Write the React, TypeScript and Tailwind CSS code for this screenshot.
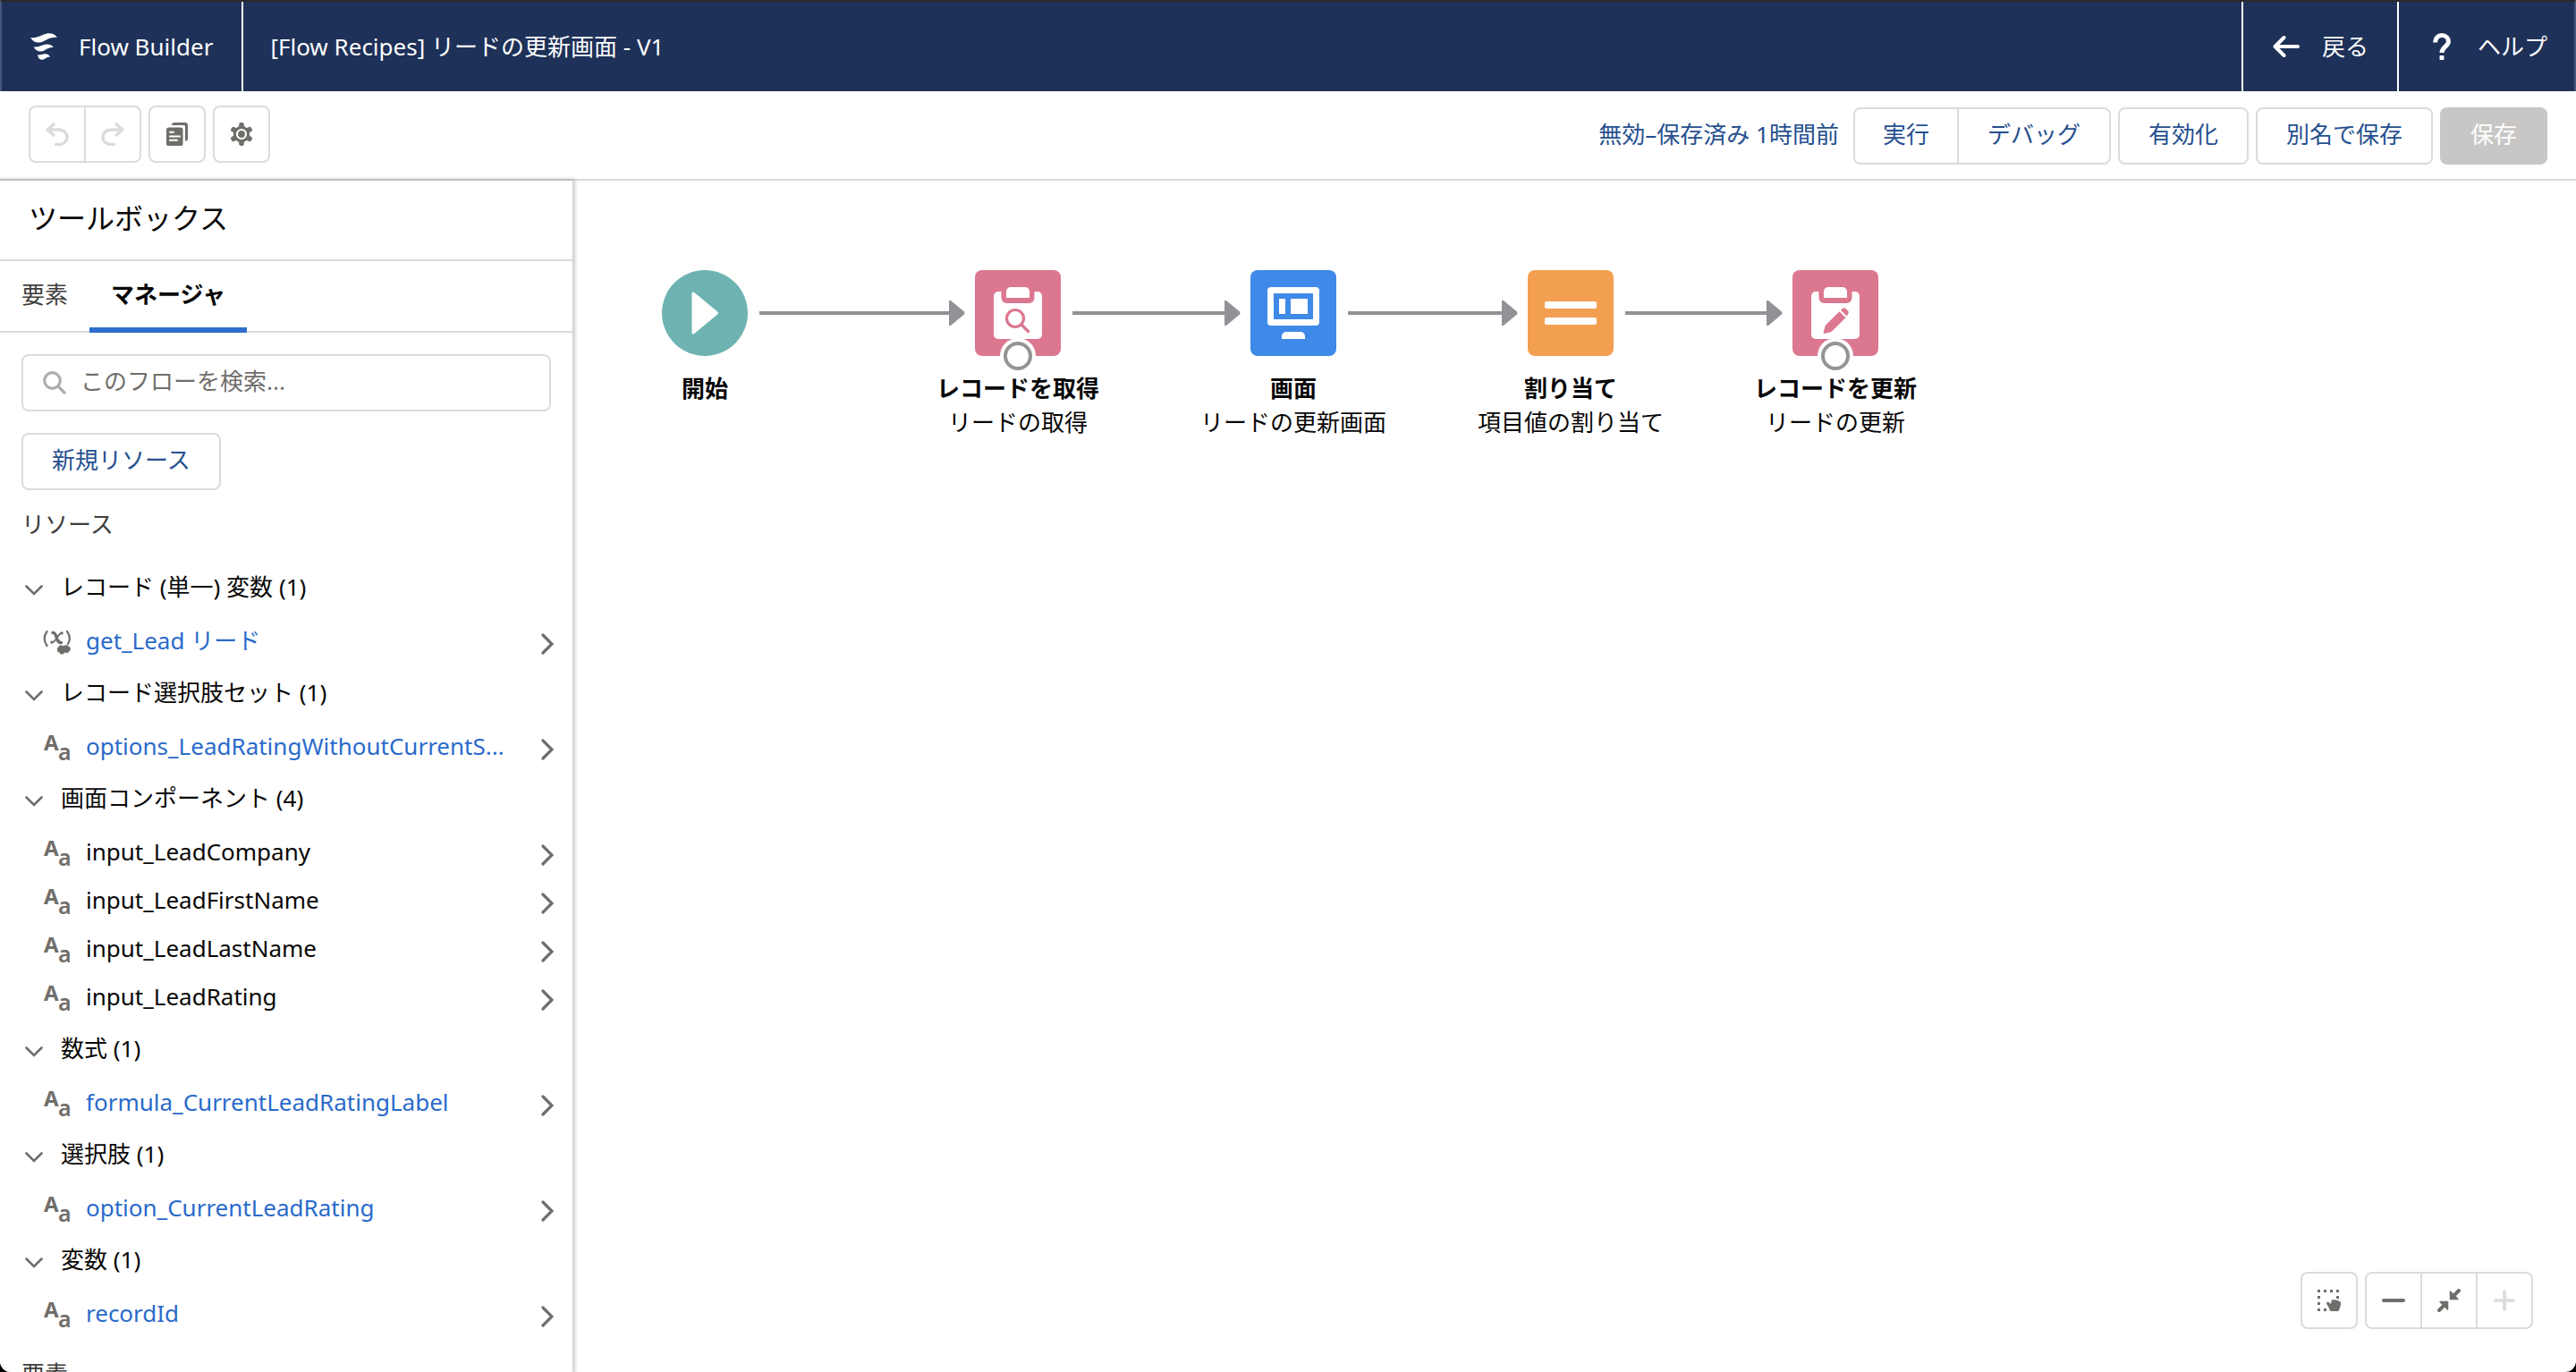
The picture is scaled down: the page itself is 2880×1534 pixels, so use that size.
import type { ReactNode } from "react";

type Item = { label: string; link?: boolean; icon?: "text" | "record" };
type Group = { title: string; items: Item[] };

const groups: Group[] = [
  { title: "レコード (単一) 変数 (1)", items: [{ label: "get_Lead リード", link: true, icon: "record" }] },
  { title: "レコード選択肢セット (1)", items: [{ label: "options_LeadRatingWithoutCurrentS...", link: true }] },
  {
    title: "画面コンポーネント (4)",
    items: [
      { label: "input_LeadCompany" },
      { label: "input_LeadFirstName" },
      { label: "input_LeadLastName" },
      { label: "input_LeadRating" },
    ],
  },
  { title: "数式 (1)", items: [{ label: "formula_CurrentLeadRatingLabel", link: true }] },
  { title: "選択肢 (1)", items: [{ label: "option_CurrentLeadRating", link: true }] },
  { title: "変数 (1)", items: [{ label: "recordId", link: true }] },
];

function FlowLogo() {
  return (
    <svg width="30" height="30" viewBox="0 0 30 30" fill="white" aria-hidden="true">
      <path d="M0 5C4 6 9 4 14 2C20 -0.7 26 -0.6 30 5C26 4.6 22 5 17 8C10 12 4 11.5 0 5Z" />
      <path d="M3.6 15.4C7 15.8 10 15 13.5 13.6C18 11.8 23 12 26 16C23 16 20 16.6 17 18.5C12 22 6.5 21 3.6 15.4Z" />
      <path d="M8 24.3C10.5 24.7 12.5 24 14.5 23.5C18 22.5 21 23.8 22 26.8C20 26.5 18.5 27 16.5 28.5C13 31 9 30 8 24.3Z" />
    </svg>
  );
}

function BackArrow() {
  return (
    <svg width="30" height="24" viewBox="0 0 30 24" fill="none" stroke="white" strokeWidth="4" strokeLinecap="round" strokeLinejoin="round" aria-hidden="true">
      <path d="M12.5 2L2.5 12L12.5 22M3 12H28" />
    </svg>
  );
}

function HelpMark() {
  return (
    <svg width="20" height="30" viewBox="0 0 20 30" aria-hidden="true">
      <path d="M2.6 10.5C2.6 5.5 5.8 2.6 10 2.6C14.4 2.6 17.4 5.5 17.4 9.5C17.4 14.8 10 15 10 22" fill="none" stroke="white" strokeWidth="5" />
      <rect x="7.5" y="25" width="5" height="5" rx="1" fill="white" />
    </svg>
  );
}

function Undo({ flip = false }: { flip?: boolean }) {
  return (
    <svg width="26" height="26" viewBox="0 0 26 26" fill="none" stroke="#dddbda" strokeWidth="3.4" strokeLinecap="round" strokeLinejoin="round" aria-hidden="true">
      <path
        d={
          flip
            ? "M17 2L24 8L17 14M23 8H11.5C6 8 2 12 2 16.5C2 21 6 24.5 11.5 24.5H14.5"
            : "M9 2L2 8L9 14M3 8H14.5C20 8 24 12 24 16.5C24 21 20 24.5 14.5 24.5H11.5"
        }
      />
    </svg>
  );
}

function CopyIcon() {
  return (
    <svg width="24" height="26" viewBox="0 0 24 26" aria-hidden="true">
      <path d="M6 3C6 1 7 0 9 0H21C23 0 24 1 24 3V18C24 20 23 20.5 21 20.5V5C21 3.5 20.5 3 19 3H6Z" fill="#706e6b" />
      <rect x="0" y="5.5" width="18.5" height="20.5" rx="2.6" fill="#706e6b" />
      <path d="M4 10.8H8M4 15.5H15M4 19.8H12" stroke="white" strokeWidth="2" strokeLinecap="round" />
    </svg>
  );
}

function Gear() {
  return (
    <svg width="24" height="26" viewBox="0 0 24 26" aria-hidden="true">
      <g fill="#706e6b">
        <circle cx="12" cy="13" r="9.2" />
        <rect x="9.2" y="0" width="5.6" height="26" rx="2" />
        <rect x="9.2" y="0" width="5.6" height="26" rx="2" transform="rotate(60 12 13)" />
        <rect x="9.2" y="0" width="5.6" height="26" rx="2" transform="rotate(120 12 13)" />
      </g>
      <circle cx="12" cy="13" r="5" fill="#706e6b" stroke="white" strokeWidth="2.2" />
    </svg>
  );
}

function SearchIcon() {
  return (
    <svg width="26" height="26" viewBox="0 0 26 26" fill="none" stroke="#b0adab" strokeWidth="3.2" strokeLinecap="round" aria-hidden="true">
      <circle cx="10.5" cy="10.5" r="8.8" />
      <path d="M17.5 17.5L24 24" />
    </svg>
  );
}

function ChevronDown() {
  return (
    <svg width="20" height="12" viewBox="0 0 20 12" fill="none" stroke="#706e6b" strokeWidth="2.6" strokeLinecap="round" aria-hidden="true">
      <path d="M1.5 1.5L10 10L18.5 1.5" />
    </svg>
  );
}

function ChevronRight() {
  return (
    <svg width="14" height="24" viewBox="0 0 14 24" fill="none" stroke="#706e6b" strokeWidth="3.2" strokeLinecap="round" aria-hidden="true">
      <path d="M2 2L12 12L2 22" />
    </svg>
  );
}

function TextTypeIcon() {
  return (
    <svg width="32" height="32" viewBox="0 0 32 32" fill="#706e6b" aria-hidden="true" className="overflow-visible font-['Noto_Sans',sans-serif]">
      <text x="1" y="19" fontSize="24" fontWeight="700">A</text>
      <text x="17" y="30" fontSize="25" fontWeight="600">a</text>
    </svg>
  );
}

function RecordTypeIcon() {
  return (
    <svg width="32" height="32" viewBox="0 0 32 32" fill="none" stroke="#706e6b" strokeLinecap="round" aria-hidden="true">
      <path d="M4.5 4C1 9 1 15 4.5 20M27 4C30.5 9 30.5 14 28 18" strokeWidth="2.2" />
      <path d="M11 5.5C16 4 14 17.5 20.5 16.5" strokeWidth="3.4" />
      <path d="M21.5 5.5C17.5 4.5 14.5 17 9.5 16.5" strokeWidth="2" />
      <circle cx="21" cy="6" r="1.6" fill="#706e6b" stroke="none" />
      <circle cx="10" cy="16" r="1.6" fill="#706e6b" stroke="none" />
      <g fill="#706e6b" stroke="white" strokeWidth="1">
        <path d="M17 21C18 18.5 21.500 18.500 23 20C25 18 28 18.500 29 20.500C31.500 21 32 24.500 30 26C29.500 28.500 26 29 24.500 28C22.500 31 19 30.500 18.500 28C15.500 28 14 23 17 21Z" />
      </g>
    </svg>
  );
}

function SelectIcon() {
  return (
    <svg width="26" height="26" viewBox="0 0 26 26" fill="#706e6b" aria-hidden="true">
      <path d="M0 1h3v3h-3zM7 1h3v3h-3zM14 1h3v3h-3zM21 1h3v3h-3zM0 8h3v3h-3zM21 8h3v3h-3zM0 15h3v3h-3zM0 22h3v3h-3zM7 22h3v3h-3z" />
      <path d="M10 15.5C11 14 13 14.5 14.3 16.5L15 17L15.6 13C16.5 11.6 18 12.2 18.5 12.5C20 11.8 21 12.2 21.6 13C23.5 12.6 24 13.5 24.2 14C25.5 14 26 14.8 26 16C26 19.5 25 21 24.3 23C24 24.4 23.5 25 22.5 25H15.5C14 25 13.5 24 13.3 22.5C12.5 19.5 10 18 10 15.5Z" />
    </svg>
  );
}

function FitIcon() {
  return (
    <svg width="26" height="26" viewBox="0 0 26 26" fill="#706e6b" stroke="#706e6b" aria-hidden="true">
      <path d="M14.5 3V11.5H23Z" strokeWidth="1.5" strokeLinejoin="round" />
      <path d="M11.5 23V14.5H3Z" strokeWidth="1.5" strokeLinejoin="round" />
      <path d="M18 8L24 2M8 18L2 24" strokeWidth="4" strokeLinecap="round" />
    </svg>
  );
}

function Clipboard({ children }: { children: ReactNode }) {
  return (
    <svg width="96" height="96" viewBox="0 0 96 96" aria-hidden="true">
      <rect x="21" y="24" width="54" height="53" rx="5" fill="white" />
      <path d="M29.5 22H66.5V31A6 6 0 0 1 60.5 37H35.5A6 6 0 0 1 29.5 31Z" fill="#dc7790" />
      <path d="M35 31V24A5 5 0 0 1 40 19H56A5 5 0 0 1 61 24V31Z" fill="white" />
      {children}
    </svg>
  );
}

const lookupArt = (
  <Clipboard>
    <g fill="none" stroke="#dc7790" strokeWidth="3.2">
      <circle cx="45" cy="54" r="9.5" />
      <path d="M51.5 60.5L60.5 69.5" />
    </g>
  </Clipboard>
);

const updateArt = (
  <Clipboard>
    <g fill="#dc7790">
      <path d="M34.5 70.8L36.6 62L52.5 46.2L59.5 53.2L43.5 69L35.5 71Z" />
      <path d="M54 44.7L56 42.9C57.3 41.9 58.5 41.9 59.6 43L62 45.5C63 46.6 63 47.9 62 49.2L60.8 51.5Z" />
    </g>
  </Clipboard>
);

const screenArt = (
  <svg width="96" height="96" viewBox="0 0 96 96" fill="white" aria-hidden="true">
    <path fillRule="evenodd" d="M23 19H73A4 4 0 0 1 77 23V58A4 4 0 0 1 73 62H23A4 4 0 0 1 19 58V23A4 4 0 0 1 23 19ZM26 26V55H70V26Z" />
    <rect x="32" y="32" width="7" height="17" />
    <rect x="45" y="32" width="19" height="17" />
    <path d="M35 77V74A5 5 0 0 1 40 69H56A5 5 0 0 1 61 74V77Z" />
  </svg>
);

const assignArt = (
  <svg width="96" height="96" viewBox="0 0 96 96" fill="white" aria-hidden="true">
    <rect x="19" y="35" width="58" height="8" rx="2" />
    <rect x="19" y="53" width="58" height="8" rx="2" />
  </svg>
);

const startArt = (
  <svg width="96" height="96" viewBox="0 0 96 96" aria-hidden="true">
    <path d="M35 26V70L61.5 48Z" fill="white" stroke="white" strokeWidth="3" strokeLinejoin="round" />
  </svg>
);

type FlowNode = { place: string; shape: string; art: ReactNode; title: string; sub?: string; port?: boolean };

const nodes: FlowNode[] = [
  { place: "left-[148px]", shape: "rounded-full bg-[#6eb3b2]", art: startArt, title: "開始" },
  { place: "left-[498px]", shape: "rounded-lg bg-[#dc7790]", art: lookupArt, title: "レコードを取得", sub: "リードの取得", port: true },
  { place: "left-[806px]", shape: "rounded-lg bg-[#3f8ae8]", art: screenArt, title: "画面", sub: "リードの更新画面" },
  { place: "left-[1116px]", shape: "rounded-lg bg-[#f29f51]", art: assignArt, title: "割り当て", sub: "項目値の割り当て" },
  { place: "left-[1412px]", shape: "rounded-lg bg-[#dc7790]", art: updateArt, title: "レコードを更新", sub: "リードの更新", port: true },
];

const connectors = [
  "left-[209px] w-[230px]",
  "left-[559px] w-[188px]",
  "left-[867px] w-[190px]",
  "left-[1177px] w-[176px]",
];

function Connector({ place }: { place: string }) {
  return (
    <div className={`absolute top-[134px] flex h-7 items-center ${place}`}>
      <div className="h-1 flex-1 bg-[#919297]" />
      <svg width="18" height="28" viewBox="0 0 18 28" fill="#919297" aria-hidden="true">
        <path d="M0 0H2L17 12.5Q18 14 17 15.5L2 28H0Z" />
      </svg>
    </div>
  );
}

function Node({ node }: { node: FlowNode }) {
  return (
    <div className={`absolute top-[100px] flex w-60 -translate-x-1/2 flex-col items-center ${node.place}`}>
      <button type="button" aria-label={node.title} className={`relative size-24 ${node.shape}`}>
        {node.art}
        {node.port && (
          <span className="absolute -bottom-5 left-7 flex size-10 items-center justify-center rounded-full bg-white">
            <span className="size-8 rounded-full border-4 border-[#969492]" />
          </span>
        )}
      </button>
      <div className="mt-[17px] whitespace-nowrap text-center leading-[38px]">
        <p className="font-bold">{node.title}</p>
        {node.sub && <p>{node.sub}</p>}
      </div>
    </div>
  );
}

const box = "border-2 border-[#dddbda] rounded-lg bg-white";
const iconCell = "box-content flex w-[60px] items-center justify-center";

function TextButton({ children }: { children: ReactNode }) {
  return (
    <button type="button" className={`h-16 px-8 pb-1 text-[#26508f] ${box}`}>
      {children}
    </button>
  );
}

export default function App() {
  return (
    <div className="h-screen bg-black">
      <div className="flex h-full flex-col overflow-hidden rounded-b-xl bg-white font-['Noto_Sans','Noto_Sans_CJK_JP',sans-serif] text-[26px] leading-9 text-[#080707]">
        <header className="flex h-[102px] shrink-0 border-x-2 border-t-2 border-x-[#48587a] border-t-[#2a2a2a] bg-[#1e3158] text-white">
          <div className="flex items-center gap-6 border-r-2 border-white pl-8 pr-8">
            <FlowLogo />
            <span className="whitespace-nowrap">Flow Builder</span>
          </div>
          <h1 className="flex flex-1 items-center pl-[30px]">[Flow Recipes] リードの更新画面 - V1</h1>
          <a href="#back" className="flex w-[174px] items-center gap-[25px] border-l-2 border-white pl-[33px]">
            <BackArrow />
            戻る
          </a>
          <a href="#help" className="flex w-[198px] items-center gap-[30px] border-l-2 border-white pl-[38px]">
            <HelpMark />
            ヘルプ
          </a>
        </header>

        <div className="flex h-[100px] shrink-0 items-start border-b-2 border-[#dddbda] px-8 pt-4">
          <div className="flex gap-2">
            <div className={`flex h-16 divide-x-2 divide-[#dddbda] ${box}`}>
              <button type="button" aria-label="元に戻す" disabled className={iconCell}>
                <Undo />
              </button>
              <button type="button" aria-label="やり直す" disabled className={iconCell}>
                <Undo flip />
              </button>
            </div>
            <button type="button" aria-label="コピー" className={`flex size-16 items-center justify-center ${box}`}>
              <CopyIcon />
            </button>
            <button type="button" aria-label="設定" className={`flex size-16 items-center justify-center ${box}`}>
              <Gear />
            </button>
          </div>
          <div className="ml-auto flex items-center gap-2 pt-[2px]">
            <a href="#status" className="mr-2 pb-1 text-[#26508f]">
              無効–保存済み 1時間前
            </a>
            <div className={`flex h-16 divide-x-2 divide-[#dddbda] text-[#26508f] ${box}`}>
              <button type="button" className="px-[31px] pb-1">実行</button>
              <button type="button" className="px-8 pb-1">デバッグ</button>
            </div>
            <TextButton>有効化</TextButton>
            <TextButton>別名で保存</TextButton>
            <button type="button" disabled className="h-16 rounded-lg bg-[#c9c7c5] px-[34px] pb-1 text-white">
              保存
            </button>
          </div>
        </div>

        <div className="flex min-h-0 flex-1">
          <aside className="z-10 w-[640px] shrink-0 overflow-hidden bg-white shadow-[1px_0_4px_2px_rgba(0,0,0,0.2)]">
            <div className="flex h-[90px] items-center border-b-2 border-[#dddbda] pb-1 pl-8">
              <h2 className="text-[32px]">ツールボックス</h2>
            </div>
            <div role="tablist" className="flex h-20 border-b-2 border-[#dddbda]">
              <button type="button" role="tab" aria-selected="false" className="px-6 pb-1 text-[#3e3e3c]">
                要素
              </button>
              <button type="button" role="tab" aria-selected="true" className="-mb-[2px] border-b-6 border-[#2e6fcc] px-6 font-bold">
                マネージャ
              </button>
            </div>

            <div className="px-6 pt-6">
              <div className={`flex h-16 items-center gap-4 px-[22px] ${box}`}>
                <SearchIcon />
                <input
                  type="search"
                  aria-label="このフローを検索"
                  placeholder="このフローを検索..."
                  className="min-w-0 flex-1 pb-1 outline-none placeholder:text-[#706e6b]"
                />
              </div>
              <div className="mt-6">
                <TextButton>新規リソース</TextButton>
              </div>
              <h3 className="mt-5 text-[#3e3e3c]">リソース</h3>
            </div>

            <div className="mt-5">
              {groups.map((g) => (
                <section key={g.title}>
                  <h4>
                    <button type="button" className="flex h-16 w-full items-center gap-5 pl-7 text-left">
                      <span className="pt-2">
                        <ChevronDown />
                      </span>
                      {g.title}
                    </button>
                  </h4>
                  <ul>
                    {g.items.map((item) => (
                      <li key={item.label} className="flex h-[54px] items-center pl-12 pr-[21px] pt-[2px]">
                        <span className="mr-4 pt-1">{item.icon === "record" ? <RecordTypeIcon /> : <TextTypeIcon />}</span>
                        {item.link ? (
                          <a href="#resource" className="min-w-0 flex-1 whitespace-nowrap text-[#2a6acb]">
                            {item.label}
                          </a>
                        ) : (
                          <span className="min-w-0 flex-1 whitespace-nowrap">{item.label}</span>
                        )}
                        <button type="button" aria-label={`${item.label} の詳細`} className="pt-2">
                          <ChevronRight />
                        </button>
                      </li>
                    ))}
                  </ul>
                </section>
              ))}
            </div>
            <h3 className="mt-6 pl-6 text-[#3e3e3c]">要素</h3>
          </aside>

          <main className="relative min-w-0 flex-1 overflow-hidden">
            {connectors.map((c) => (
              <Connector key={c} place={c} />
            ))}
            {nodes.map((n) => (
              <Node key={n.title} node={n} />
            ))}
            <div className="absolute bottom-12 right-12 flex gap-2">
              <button type="button" aria-label="選択" className={`flex size-16 items-center justify-center ${box}`}>
                <SelectIcon />
              </button>
              <div className={`flex h-16 divide-x-2 divide-[#dddbda] ${box}`}>
                <button type="button" aria-label="縮小" className={iconCell}>
                  <span className="h-1 w-[26px] rounded-full bg-[#706e6b]" />
                </button>
                <button type="button" aria-label="全体を表示" className={iconCell}>
                  <FitIcon />
                </button>
                <button type="button" aria-label="拡大" disabled className={iconCell}>
                  <svg width="24" height="24" viewBox="0 0 24 24" fill="none" stroke="#dddbda" strokeWidth="3.6" strokeLinecap="round" aria-hidden="true">
                    <path d="M12 2V22M2 12H22" />
                  </svg>
                </button>
              </div>
            </div>
          </main>
        </div>
      </div>
    </div>
  );
}
